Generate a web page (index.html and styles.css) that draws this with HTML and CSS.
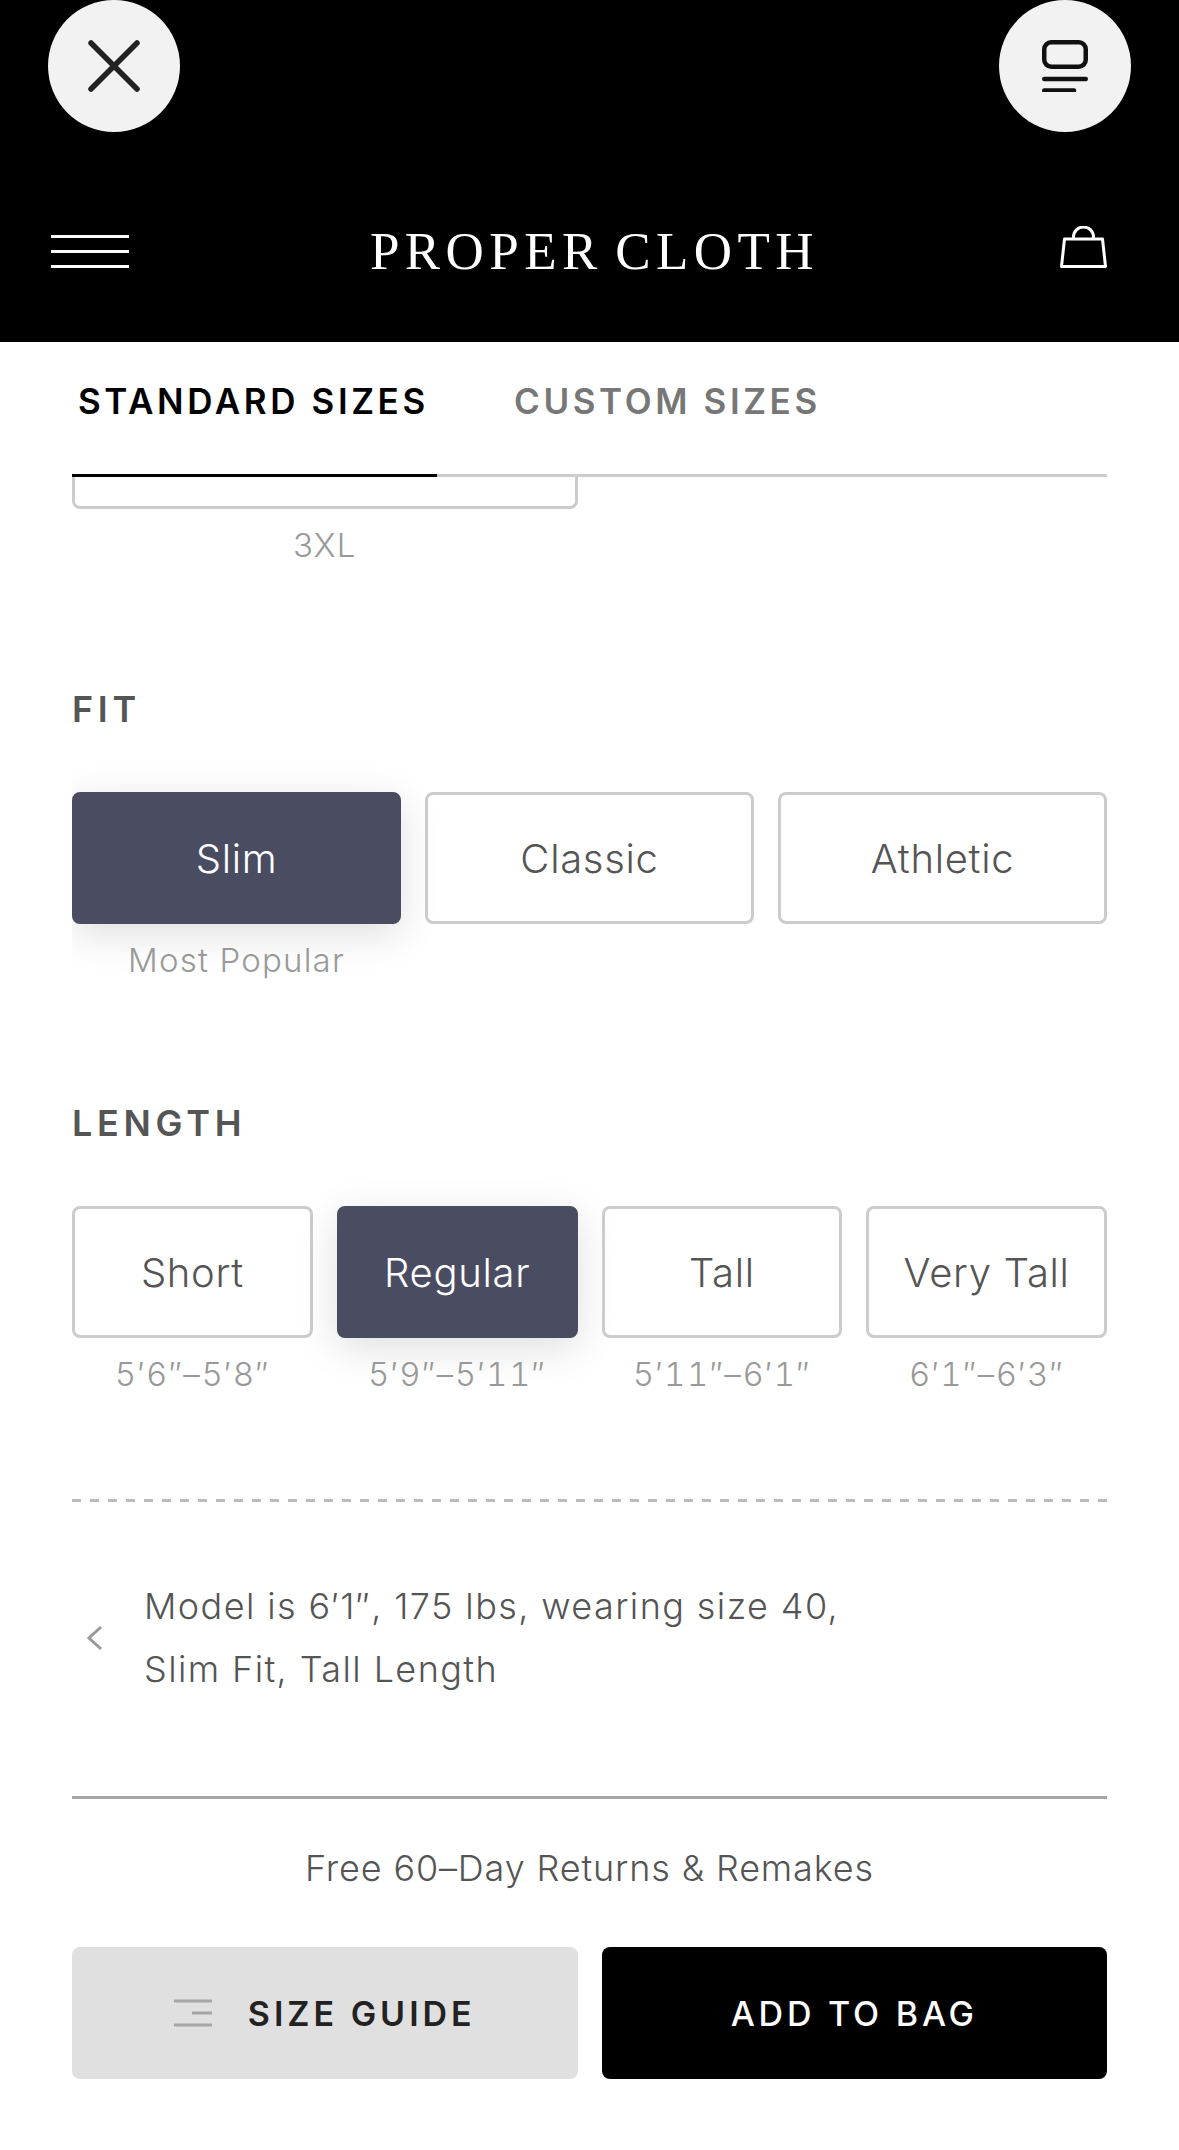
FILE: index.html
```html
<!DOCTYPE html>
<html lang="en">
<head>
<meta charset="utf-8">
<title>Proper Cloth</title>
<link rel="stylesheet" href="styles.css">
</head>
<body>
<header class="header">
  <div class="top-row">
    <button class="circle" aria-label="Close">
      <svg width="52" height="52" viewBox="0 0 52 52"><path d="M3 3 L49 49 M49 3 L3 49" fill="none" stroke="#222" stroke-width="5.5" stroke-linecap="round"/></svg>
    </button>
    <button class="circle" aria-label="Reader">
      <svg width="46" height="52" viewBox="0 0 46 52"><rect x="2.25" y="2.25" width="41.5" height="24.5" rx="7" fill="none" stroke="#111" stroke-width="4.5"/><path d="M2.25 39 H43.75 M2.25 50.5 H32" fill="none" stroke="#111" stroke-width="4.5" stroke-linecap="round"/></svg>
    </button>
  </div>
  <div class="nav-row">
    <svg class="burger" width="78" height="33" viewBox="0 0 78 33"><path d="M0 1.5 H78 M0 16.5 H78 M0 31.5 H78" stroke="#fff" stroke-width="3"/></svg>
    <div class="logo">PROPER CLOTH</div>
    <svg class="bag" width="47" height="42" viewBox="0 0 47 42"><path d="M4.5 13 H42.5 L45.5 40.5 H1.5 Z" fill="none" stroke="#fff" stroke-width="3" stroke-linejoin="round"/><path d="M13.5 13 V11 a10 10 0 0 1 20 0 V13" fill="none" stroke="#fff" stroke-width="3"/></svg>
  </div>
</header>
<main class="panel">
  <nav class="tabs">
    <div class="tab tab-active">STANDARD SIZES</div>
    <div class="tab tab-other">CUSTOM SIZES</div>
  </nav>
  <div class="size-row">
    <div class="size-cell">
      <div class="size-stub"></div>
      <div class="note">3XL</div>
    </div>
    <div class="size-cell"></div>
  </div>
  <section class="fit-section">
    <h2 class="heading">FIT</h2>
    <div class="choices choices-3">
      <div class="choice"><div class="btn btn-on">Slim</div><div class="note">Most Popular</div></div>
      <div class="choice"><div class="btn">Classic</div></div>
      <div class="choice"><div class="btn">Athletic</div></div>
    </div>
  </section>
  <section class="length-section">
    <h2 class="heading">LENGTH</h2>
    <div class="choices choices-4">
      <div class="choice"><div class="btn">Short</div><div class="note note-height">5′6″–5′8″</div></div>
      <div class="choice"><div class="btn btn-on">Regular</div><div class="note note-height">5′9″–5′11″</div></div>
      <div class="choice"><div class="btn">Tall</div><div class="note note-height">5′11″–6′1″</div></div>
      <div class="choice"><div class="btn">Very Tall</div><div class="note note-height">6′1″–6′3″</div></div>
    </div>
  </section>
  <div class="model">
    <svg class="chevron" width="18" height="26" viewBox="0 0 18 26"><path d="M15 2 L3 13 L15 24" fill="none" stroke="#999" stroke-width="3"/></svg>
    <p class="model-text">Model is 6′1″, 175 lbs, wearing size 40,<br>Slim Fit, Tall Length</p>
  </div>
  <footer class="footer">
    <p class="returns">Free 60–Day Returns &amp; Remakes</p>
    <div class="actions">
      <div class="action action-guide">
        <svg width="38" height="28" viewBox="0 0 38 28"><path d="M0 2 H38 M18 14 H38 M0 26 H38" stroke="#a6a6a6" stroke-width="3"/></svg>
        <span>SIZE GUIDE</span>
      </div>
      <div class="action action-add"><span>ADD TO BAG</span></div>
    </div>
  </footer>
</main>
</body>
</html>
```

FILE: styles.css
```css
* { box-sizing: border-box; }
html, body { margin: 0; padding: 0; background: #fff; }
body {
  width: 1179px;
  height: 2150px;
  overflow: hidden;
  font-family: "Inter", "Liberation Sans", sans-serif;
  color: #555;
}
.header { height: 342px; background: #000; padding: 0 48px; }
.top-row { display: flex; justify-content: space-between; height: 132px; }
.circle {
  width: 132px; height: 132px; border-radius: 50%; border: 0; padding: 0;
  background: #f2f2f2; display: flex; align-items: center; justify-content: center;
}
.nav-row {
  height: 182px; margin: 28px 24px 0 3px;
  display: flex; align-items: center; justify-content: space-between;
}
.bag { margin-bottom: 9px; }
.logo {
  font-family: "Liberation Serif", serif; font-size: 53px; line-height: 1;
  letter-spacing: 5.4px; word-spacing: -6px; color: #fff; white-space: nowrap;
}
.panel { padding: 0 72px; }
.tabs { display: flex; height: 135px; border-bottom: 3px solid #ccc; }
.tab {
  margin-bottom: -3px; padding: 0 6px 15px;
  border-bottom: 3px solid transparent;
  display: flex; align-items: center;
  font-size: 35px; font-weight: 600; letter-spacing: 3.6px; color: #777;
}
.tab-active { width: 365px; color: #000; border-bottom-color: #000; }
.tab-other { padding-left: 77px; }
.size-row { display: grid; grid-template-columns: 1fr 1fr; gap: 24px; }
.size-stub {
  height: 32px; border: 3px solid #ccc; border-top: 0; border-radius: 0 0 8px 8px;
}
.note {
  margin-top: 16px; text-align: center; font-size: 33px; font-weight: 300; line-height: 40px; color: #999;
  letter-spacing: 1.2px; white-space: nowrap;
}
.note-height { letter-spacing: 1.6px; font-variant-numeric: tabular-nums; }
.fit-section { margin-top: 122px; }
.length-section { margin-top: 121px; }
.heading {
  margin: 0 0 61px; font-size: 36px; line-height: 44px; font-weight: 600; letter-spacing: 4.7px; color: #555;
}
.choices { display: grid; gap: 24px; }
.choices-3 { grid-template-columns: repeat(3, 1fr); clip-path: inset(-70px -70px -70px 0); }
.choices-4 { grid-template-columns: repeat(4, 1fr); }
.btn {
  height: 132px; border: 3px solid #ccc; border-radius: 8px; display: flex; align-items: center; justify-content: center;
  font-size: 40px; font-weight: 300; letter-spacing: .7px; color: #555;
}
.btn-on {
  background: #4a4d62; border-color: #4a4d62; color: #fff;
  box-shadow: 0 10px 40px rgba(0,0,0,.13);
}
.model {
  margin-top: 105px; height: 300px; padding: 3px 0 22px 14px;
  display: flex; align-items: center;
  background: repeating-linear-gradient(90deg, #bbb 0 9px, transparent 9px 18px) top left / 100% 3px no-repeat;
  border-bottom: 3px solid #a6a6a6;
}
.chevron { flex: none; margin-right: 40px; }
.model-text { margin: 0; font-size: 36px; font-weight: 300; letter-spacing: 1.4px; line-height: 63px; color: #555; }
.footer { text-align: center; }
.returns { margin: 45px 0 0; font-size: 36px; font-weight: 300; letter-spacing: .85px; line-height: 48px; color: #555; }
.actions { display: grid; grid-template-columns: 1fr 1fr; gap: 24px; margin-top: 55px; }
.action {
  height: 132px; border-radius: 8px; display: flex; align-items: center; justify-content: center; gap: 36px;
  font-size: 34px; font-weight: 600; letter-spacing: 4px;
}
.action-guide { background: #e0e0e0; color: #222; }
.action-add { background: #000; color: #fff; font-weight: 500; letter-spacing: 3.8px; }
```
